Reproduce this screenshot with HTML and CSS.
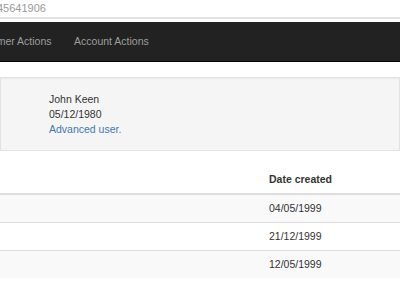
FILE: index.html
```html
<!DOCTYPE html>
<html>
<head>
<meta charset="utf-8">
<link rel="stylesheet" href="styles.css">
</head>
<body>
<div class="search">
  <span class="search-value">45641906</span>
</div>
<nav class="navbar">
  <ul class="nav">
    <li><a class="nav-link" href="#">Customer Actions</a></li>
    <li><a class="nav-link" href="#">Account Actions</a></li>
  </ul>
</nav>
<section class="well">
  <div class="profile">
    <div>John Keen</div>
    <div>05/12/1980</div>
    <div class="link">Advanced user.</div>
  </div>
</section>
<table class="table">
  <thead>
    <tr><th class="col-main"></th><th class="col-date">Date created</th></tr>
  </thead>
  <tbody>
    <tr><td></td><td>04/05/1999</td></tr>
    <tr><td></td><td>21/12/1999</td></tr>
    <tr><td></td><td>12/05/1999</td></tr>
  </tbody>
</table>
</body>
</html>
```

FILE: styles.css
```css
* { box-sizing: border-box; }
html, body { margin: 0; padding: 0; background: #fff; }
body {
  font-family: "Liberation Sans", Arial, sans-serif;
  font-size: 10.5px;
  line-height: 15px;
  color: #333;
  width: 400px;
  overflow: hidden;
}
.search {
  height: 19px;
  border-bottom: 2px solid #e2e2e2;
  margin-bottom: 3px;
  padding-top: 1px;
  color: #9a9a9a;
  font-size: 11px;
  line-height: 15px;
}
.search-value { margin-left: -3px; }
.navbar {
  background: #222;
  border-bottom: 1px solid #080808;
  height: 40px;
  margin-bottom: 15px;
}
.nav {
  list-style: none;
  margin: 0 0 0 -42px;
  padding: 0;
  display: flex;
}
.nav-link {
  display: block;
  padding: 12px 11.25px;
  color: #9d9d9d;
  text-decoration: none;
  white-space: nowrap;
}
.well {
  background: #f5f5f5;
  border: 1px solid #e3e3e3;
  box-shadow: inset 0 1px 1px rgba(0,0,0,.05);
  padding: 13.5px 0 13.5px 48px;
  margin-bottom: 15px;
}
.link { color: #3f78b0; }
.table {
  width: 100%;
  border-collapse: collapse;
  border-spacing: 0;
}
.table th, .table td {
  padding: 6px;
  text-align: left;
  line-height: 15px;
}
.table th { font-weight: bold; border-bottom: 2px solid #ddd; }
.table td { border-top: 1px solid #ddd; }
.table tbody tr:first-child td { border-top: 0; }
.col-main { width: 263px; }
.table tbody tr:nth-child(odd) { background: #f9f9f9; }
```
